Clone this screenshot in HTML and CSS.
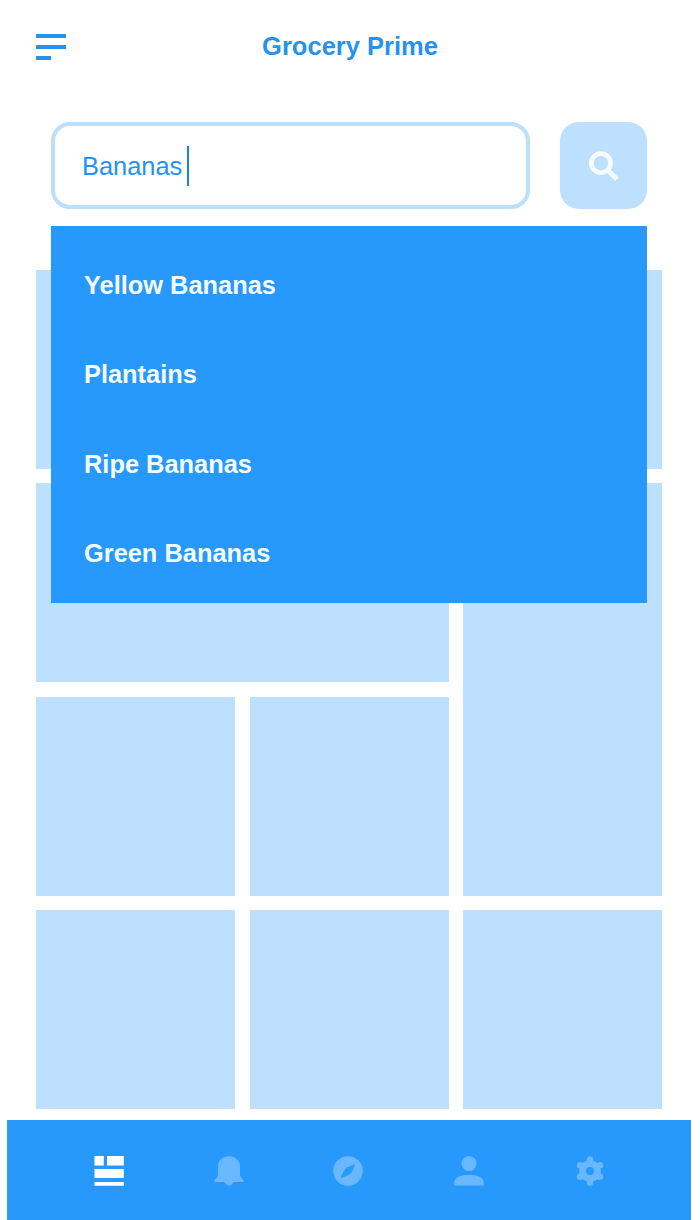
FILE: index.html
```html
<!DOCTYPE html>
<html lang="en">
<head>
<meta charset="utf-8">
<title>Grocery Prime</title>
<link rel="stylesheet" href="styles.css">
</head>
<body>
<div class="app">
  <header class="header">
    <button class="menu" aria-label="Menu"><span class="bar"></span><span class="bar"></span><span class="bar bar-short"></span></button>
    <h1 class="title">Grocery Prime</h1>
  </header>
  <section class="search">
    <div class="field"><span class="query">Bananas</span><span class="caret"></span></div>
    <button class="search-button" aria-label="Search">
      <svg width="30" height="30" viewBox="0 0 30 30" fill="none" stroke="#f6fbff"><circle cx="11.900" cy="12.200" r="9.600" stroke-width="4.600"/><path d="M18 18.300 28 28.300" stroke-width="4.800"/></svg>
    </button>
    <ul class="suggestions">
      <li class="suggestion">Yellow Bananas</li>
      <li class="suggestion">Plantains</li>
      <li class="suggestion">Ripe Bananas</li>
      <li class="suggestion">Green Bananas</li>
    </ul>
  </section>
  <main class="tiles">
    <div class="tile"></div><div class="tile"></div><div class="tile"></div>
    <div class="tile tile-wide"></div><div class="tile tile-tall"></div>
    <div class="tile"></div><div class="tile"></div>
    <div class="tile"></div><div class="tile"></div><div class="tile"></div>
  </main>
  <nav class="nav">
    <a class="nav-item active" aria-label="Home"><svg width="30" height="30" viewBox="0 0 30 30" fill="currentColor"><path d="M.5 0h9.300v9.500H.5zM13 0h16.800v9.500H13zM.5 13h29.300v9H.5zM.5 26h29.300v3.800H.5z"/></svg></a>
    <a class="nav-item" aria-label="Notifications"><svg width="30" height="30" viewBox="0 0 30 30" fill="currentColor"><path d="M15 .2C8.500.2 4 4.700 4 11v7.500c0 2.200-1.400 3.600-2.700 4.400C0 23.800.1 26 1.500 26H9.500c1 .1 1.700.5 2.300 1.700.8 1.400 1.800 1.900 3.200 1.900s2.400-.5 3.200-1.900c.6-1.200 1.300-1.600 2.300-1.700h8c1.400 0 1.500-2.200.2-3.100C27.400 22.100 26 20.700 26 18.500V11C26 4.700 21.500.2 15 .2z"/></svg></a>
    <a class="nav-item" aria-label="Explore"><svg width="30" height="30" viewBox="0 0 30 30" fill="currentColor"><path fill-rule="evenodd" d="M15 .2a14.800 14.800 0 1 0 0 29.600 14.800 14.800 0 0 0 0-29.600zM22 8c-1.500 5.500-3 8.200-5.300 10.200-2 1.700-5.300 1.700-8.700 4 1.500-5.400 3-8.200 5.300-10.200C15.300 10.300 18.600 10.300 22 8z"/></svg></a>
    <a class="nav-item" aria-label="Profile"><svg width="30" height="30" viewBox="0 0 30 30" fill="currentColor"><circle cx="15" cy="7.600" r="7.500"/><path d="M.2 29.600v-2.800C.2 21.700 7 18.800 15 18.800s14.800 2.900 14.800 8v2.800z"/></svg></a>
    <a class="nav-item" aria-label="Settings"><svg width="30" height="30" viewBox="0 0 30 30" fill="currentColor"><path fill-rule="evenodd" d="M15 4.200a10.800 10.800 0 1 0 0 21.600 10.800 10.800 0 0 0 0-21.600zM15 11a4 4 0 1 0 0 8 4 4 0 0 0 0-8z"/><circle cx="15" cy="3.400" r="3.200"/><circle cx="25" cy="9.200" r="3.200"/><circle cx="25" cy="20.800" r="3.200"/><circle cx="15" cy="26.600" r="3.200"/><circle cx="5" cy="20.800" r="3.200"/><circle cx="5" cy="9.200" r="3.200"/></svg></a>
  </nav>
</div>
</body>
</html>
```
FILE: styles.css
```css
* { box-sizing: border-box; }
body {
  margin: 0;
  background: #fff;
  font-family: "Liberation Sans", Arial, sans-serif;
  font-size: 25.4px;
  color: #2592ef;
}
button { border: 0; padding: 0; background: none; }
.app {
  height: 1220px;
  display: flex;
  flex-direction: column;
  overflow: hidden;
}
.header {
  height: 92px;
  padding: 0 36px;
  display: grid;
  grid-template-columns: 30px 1fr 30px;
  align-items: center;
}
.menu { display: flex; flex-direction: column; gap: 7px; padding-top: 2px; }
.bar { width: 30px; height: 4px; background: #2592ef; }
.bar-short { width: 15px; }
.title { margin: 0; font-size: 25.5px; line-height: 30px; text-align: center; }
.search {
  position: relative;
  display: flex;
  gap: 30px;
  height: 87px;
  margin: 30px 53px 61px 51px;
}
.field {
  flex: 1;
  display: flex;
  align-items: center;
  gap: 5px;
  padding-left: 27px;
  border: 4px solid #bcdffc;
  border-radius: 19px;
}
.query { padding-top: 2px; }
.caret { width: 2px; height: 40px; background: #1f80dd; }
.search-button {
  width: 87px;
  display: flex;
  align-items: center;
  justify-content: center;
  border-radius: 19px;
  background: #bde0ff;
}
.suggestions {
  position: absolute;
  z-index: 1;
  top: 104px;
  left: 0;
  right: 0;
  height: 377px;
  margin: 0;
  padding: 15px 33px 0;
  list-style: none;
  background: #2799fd;
}
.suggestion {
  height: 89.4px;
  line-height: 89.4px;
  font-weight: bold;
  color: #f4fcff;
}
.tiles {
  height: 839px;
  margin: 0 38px 0 36px;
  display: grid;
  grid-template-columns: repeat(3, 1fr);
  grid-template-rows: repeat(4, 1fr);
  gap: 14.5px;
}
.tile { background: #bde0ff; }
.tile-wide { grid-column: span 2; }
.tile-tall { grid-row: span 2; }
.nav {
  flex: 1;
  display: grid;
  grid-template-columns: 120px 119px 120.5px 121.5px 30px;
  margin: 11px 9px 0 7px;
  padding: 36px 0 0 87px;
  background: #2799fd;
}
.nav-item { color: #69b8ff; height: 30px; }
.nav-item svg { display: block; }
.active { color: #fff; }
```
